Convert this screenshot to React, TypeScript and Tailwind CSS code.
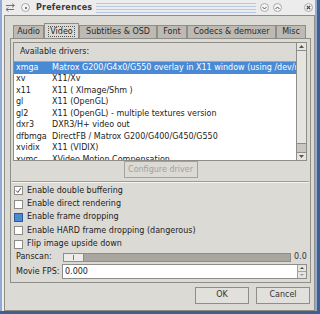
import React from "react";

const DRIVERS: [string, string][] = [
  ["xmga", "Matrox G200/G4x0/G550 overlay in X11 window (using /dev/mga_vid)"],
  ["xv", "X11/Xv"],
  ["x11", "X11 ( XImage/Shm )"],
  ["gl", "X11 (OpenGL)"],
  ["gl2", "X11 (OpenGL) - multiple textures version"],
  ["dxr3", "DXR3/H+ video out"],
  ["dfbmga", "DirectFB / Matrox G200/G400/G450/G550"],
  ["xvidix", "X11 (VIDIX)"],
  ["xvmc", "XVideo Motion Compensation"],
];

const TABS: { label: string; w: string; active?: boolean }[] = [
  { label: "Audio", w: "w-[31px]" },
  { label: "Video", w: "w-[35px]", active: true },
  { label: "Subtitles & OSD", w: "w-[78px]" },
  { label: "Font", w: "w-[30px]" },
  { label: "Codecs & demuxer", w: "w-[89px]" },
  { label: "Misc", w: "w-[30px]" },
];

const OPTIONS: { label: string; state: "on" | "off" | "focus" }[] = [
  { label: "Enable double buffering", state: "on" },
  { label: "Enable direct rendering", state: "off" },
  { label: "Enable frame dropping", state: "focus" },
  { label: "Enable HARD frame dropping (dangerous)", state: "off" },
  { label: "Flip image upside down", state: "off" },
];

function CircleBtn({ children }: { children?: React.ReactNode }) {
  return (
    <span className="flex h-[9px] w-[9px] items-center justify-center rounded-full border border-[#a9a9a9] bg-[#f4f4f4]">
      {children}
    </span>
  );
}

function Check({ state }: { state: "on" | "off" | "focus" }) {
  if (state === "focus") {
    return <span className="h-[9px] w-[9px] shrink-0 border border-[#2c5d98] bg-[#4a8ad4]" />;
  }
  return (
    <span className="flex h-[9px] w-[9px] shrink-0 items-center justify-center border border-[#8d8b86] bg-white">
      {state === "on" && (
        <svg width="7" height="7" viewBox="0 0 7 7">
          <path d="M1 3.5 L2.8 5.5 L6 1" fill="none" stroke="#4c4c4c" strokeWidth="1" />
        </svg>
      )}
    </span>
  );
}

export default function App() {
  return (
    <div className="flex h-[314px] w-[320px] flex-col overflow-hidden bg-[#3f5f8f] font-['DejaVu_Sans',sans-serif] text-[8px] text-[#1c1c1c]">
      <div className="flex h-[311px] w-[317px] flex-col border-l-2 border-r-2 border-[#8fabd6] bg-[#eeeeee]">
        {/* title bar */}
        <div className="flex h-[15px] shrink-0 items-center bg-[#ececec] pl-[3px] pr-[2px]">
          <svg width="11" height="9" viewBox="0 0 11 9" className="shrink-0">
            <path d="M1 2.5 H9 M1 6.5 H9" stroke="#6f6f6f" strokeWidth="1.2" />
            <path d="M7 0.5 L9.5 2.5 L7 4.5 M3.5 4.5 L1 6.5 L3.5 8.5" fill="none" stroke="#6f6f6f" strokeWidth="0.9" />
          </svg>
          <span className="ml-[5px]">
            <CircleBtn>
              <span className="h-[2px] w-[2px] rounded-full bg-[#555]" />
            </CircleBtn>
          </span>
          <span className="ml-[6px] font-bold tracking-[0.2px] text-[#3a3a3a]">Preferences</span>
          <div className="mx-[4px] h-[10px] flex-1 bg-[repeating-linear-gradient(to_bottom,#b7c7e6_0_1px,transparent_1px_3px)]" />
          <CircleBtn>
            <svg width="5" height="4" viewBox="0 0 5 4"><path d="M0.5 1 L2.5 3 L4.5 1" fill="none" stroke="#555" strokeWidth="1" /></svg>
          </CircleBtn>
          <span className="ml-[4px]">
            <CircleBtn>
              <svg width="5" height="4" viewBox="0 0 5 4"><path d="M0.5 3 L2.5 1 L4.5 3" fill="none" stroke="#555" strokeWidth="1" /></svg>
            </CircleBtn>
          </span>
          <span className="ml-[22px]">
            <CircleBtn>
              <svg width="5" height="5" viewBox="0 0 5 5"><path d="M0.8 0.8 L4.2 4.2 M4.2 0.8 L0.8 4.2" stroke="#444" strokeWidth="1.2" /></svg>
            </CircleBtn>
          </span>
        </div>

        {/* body */}
        <div className="ml-[2px] flex flex-1 flex-col border border-[#8f8d88] bg-[#dcdad5] pb-[4px] pl-[5px] pr-[3px] pt-[7px]">
          {/* tabs */}
          <div className="flex h-[15px] items-end pl-[3px]">
            {TABS.map((t) =>
              t.active ? (
                <div
                  key={t.label}
                  className={`${t.w} -mb-px flex h-[16px] items-center justify-center border border-b-0 border-[#8f8d88] bg-[#dcdad5]`}
                >
                  <span className="border border-dotted border-[#555] px-[1px] leading-[9px]">{t.label}</span>
                </div>
              ) : (
                <div
                  key={t.label}
                  className={`${t.w} flex h-[13px] items-center justify-center border border-b-0 border-[#8f8d88] bg-[#bdbab4] text-[#2a2a2a]`}
                >
                  {t.label}
                </div>
              ),
            )}
          </div>

          {/* panel */}
          <div className="flex w-[301px] flex-col border border-[#8f8d88] bg-[#dcdad5] pb-[2px]">
            {/* tree view */}
            <div className="ml-[2px] mr-[3px] mt-[3px] flex h-[119px] border border-[#8f8d88] bg-white">
              <div className="flex min-w-0 flex-1 flex-col overflow-hidden">
                <div className="flex h-[19px] shrink-0 items-center border-b border-[#a8a6a1] bg-[#dcdad5] pl-[6px]">
                  Available drivers:
                </div>
                {DRIVERS.map(([name, desc], i) => (
                  <div
                    key={name}
                    className={`flex h-[11.5px] shrink-0 items-center whitespace-nowrap ${
                      i === 0 ? "bg-[#4a8ad4] text-white" : ""
                    }`}
                  >
                    <span className="w-[38px] shrink-0 pl-[2px]">{name}</span>
                    <span>{desc}</span>
                  </div>
                ))}
              </div>
              {/* scrollbar */}
              <div className="flex w-[10px] shrink-0 flex-col border-l border-[#8f8d88] bg-[#c9c6c1]">
                <div className="flex h-[8px] items-center justify-center border-b border-[#8f8d88] bg-[#e6e4e1]">
                  <svg width="5" height="3" viewBox="0 0 5 3"><path d="M0 3 L2.5 0 L5 3 Z" fill="#555" /></svg>
                </div>
                <div className="h-[93px] border-b border-[#8f8d88] bg-[#e6e4e1]" />
                <div className="flex-1" />
                <div className="flex h-[8px] items-center justify-center border-t border-[#8f8d88] bg-[#e6e4e1]">
                  <svg width="5" height="3" viewBox="0 0 5 3"><path d="M0 0 L2.5 3 L5 0 Z" fill="#555" /></svg>
                </div>
              </div>
            </div>

            {/* configure button */}
            <div className="flex justify-center">
              <div className="flex h-[17px] w-[74px] items-center justify-center border border-[#a5a39e] bg-[#dcdad5] text-[#a3a19c]">
                Configure driver
              </div>
            </div>

            {/* separator */}
            <div className="mx-[1px] mt-[3px] h-[2px] border-t border-b border-t-[#9d9b96] border-b-[#f5f4f2]" />

            {/* options */}
            <div className="mt-px flex flex-col">
              {OPTIONS.map((o) => (
                <div key={o.label} className="flex h-[13.4px] items-center gap-[4px] pl-[3px]">
                  <Check state={o.state} />
                  <span>{o.label}</span>
                </div>
              ))}
            </div>

            {/* panscan */}
            <div className="flex h-[13px] items-center pl-[5px]">
              <span className="w-[47px] shrink-0">Panscan:</span>
              <div className="flex h-[9px] w-[228px] border border-[#8f8d88] bg-[#a9a6a0]">
                <div className="flex h-full w-[20px] items-center justify-center border-r border-[#8f8d88] bg-[#eeece9]">
                  <span className="h-[5px] w-px bg-[#777]" />
                </div>
              </div>
              <span className="ml-[3px] text-[#333]">0.0</span>
            </div>

            {/* movie fps */}
            <div className="flex h-[16px] items-center pl-[5px]">
              <span className="w-[46px] shrink-0">Movie FPS:</span>
              <div className="flex h-[15px] w-[245px] border border-[#8f8d88] bg-white">
                <span className="flex-1 pl-[2px] leading-[13px]">0.000</span>
                <div className="flex w-[9px] flex-col border-l border-[#a5a39e] bg-[#e6e4e1]">
                  <div className="flex flex-1 items-center justify-center border-b border-[#a5a39e]">
                    <svg width="4" height="2" viewBox="0 0 4 2"><path d="M0 2 L2 0 L4 2 Z" fill="#444" /></svg>
                  </div>
                  <div className="flex flex-1 items-center justify-center">
                    <svg width="4" height="2" viewBox="0 0 4 2"><path d="M0 0 L2 2 L4 0 Z" fill="#999" /></svg>
                  </div>
                </div>
              </div>
            </div>
          </div>

          {/* buttons */}
          <div className="mt-[4px] flex justify-end gap-[7px] pr-px">
            <div className="flex h-[17px] w-[54px] items-center justify-center border border-[#8f8d88] bg-[#e2e0dc] text-[#333]">
              OK
            </div>
            <div className="flex h-[17px] w-[54px] items-center justify-center border border-[#8f8d88] bg-[#e2e0dc] text-[#333]">
              Cancel
            </div>
          </div>
        </div>
      </div>
    </div>
  );
}
